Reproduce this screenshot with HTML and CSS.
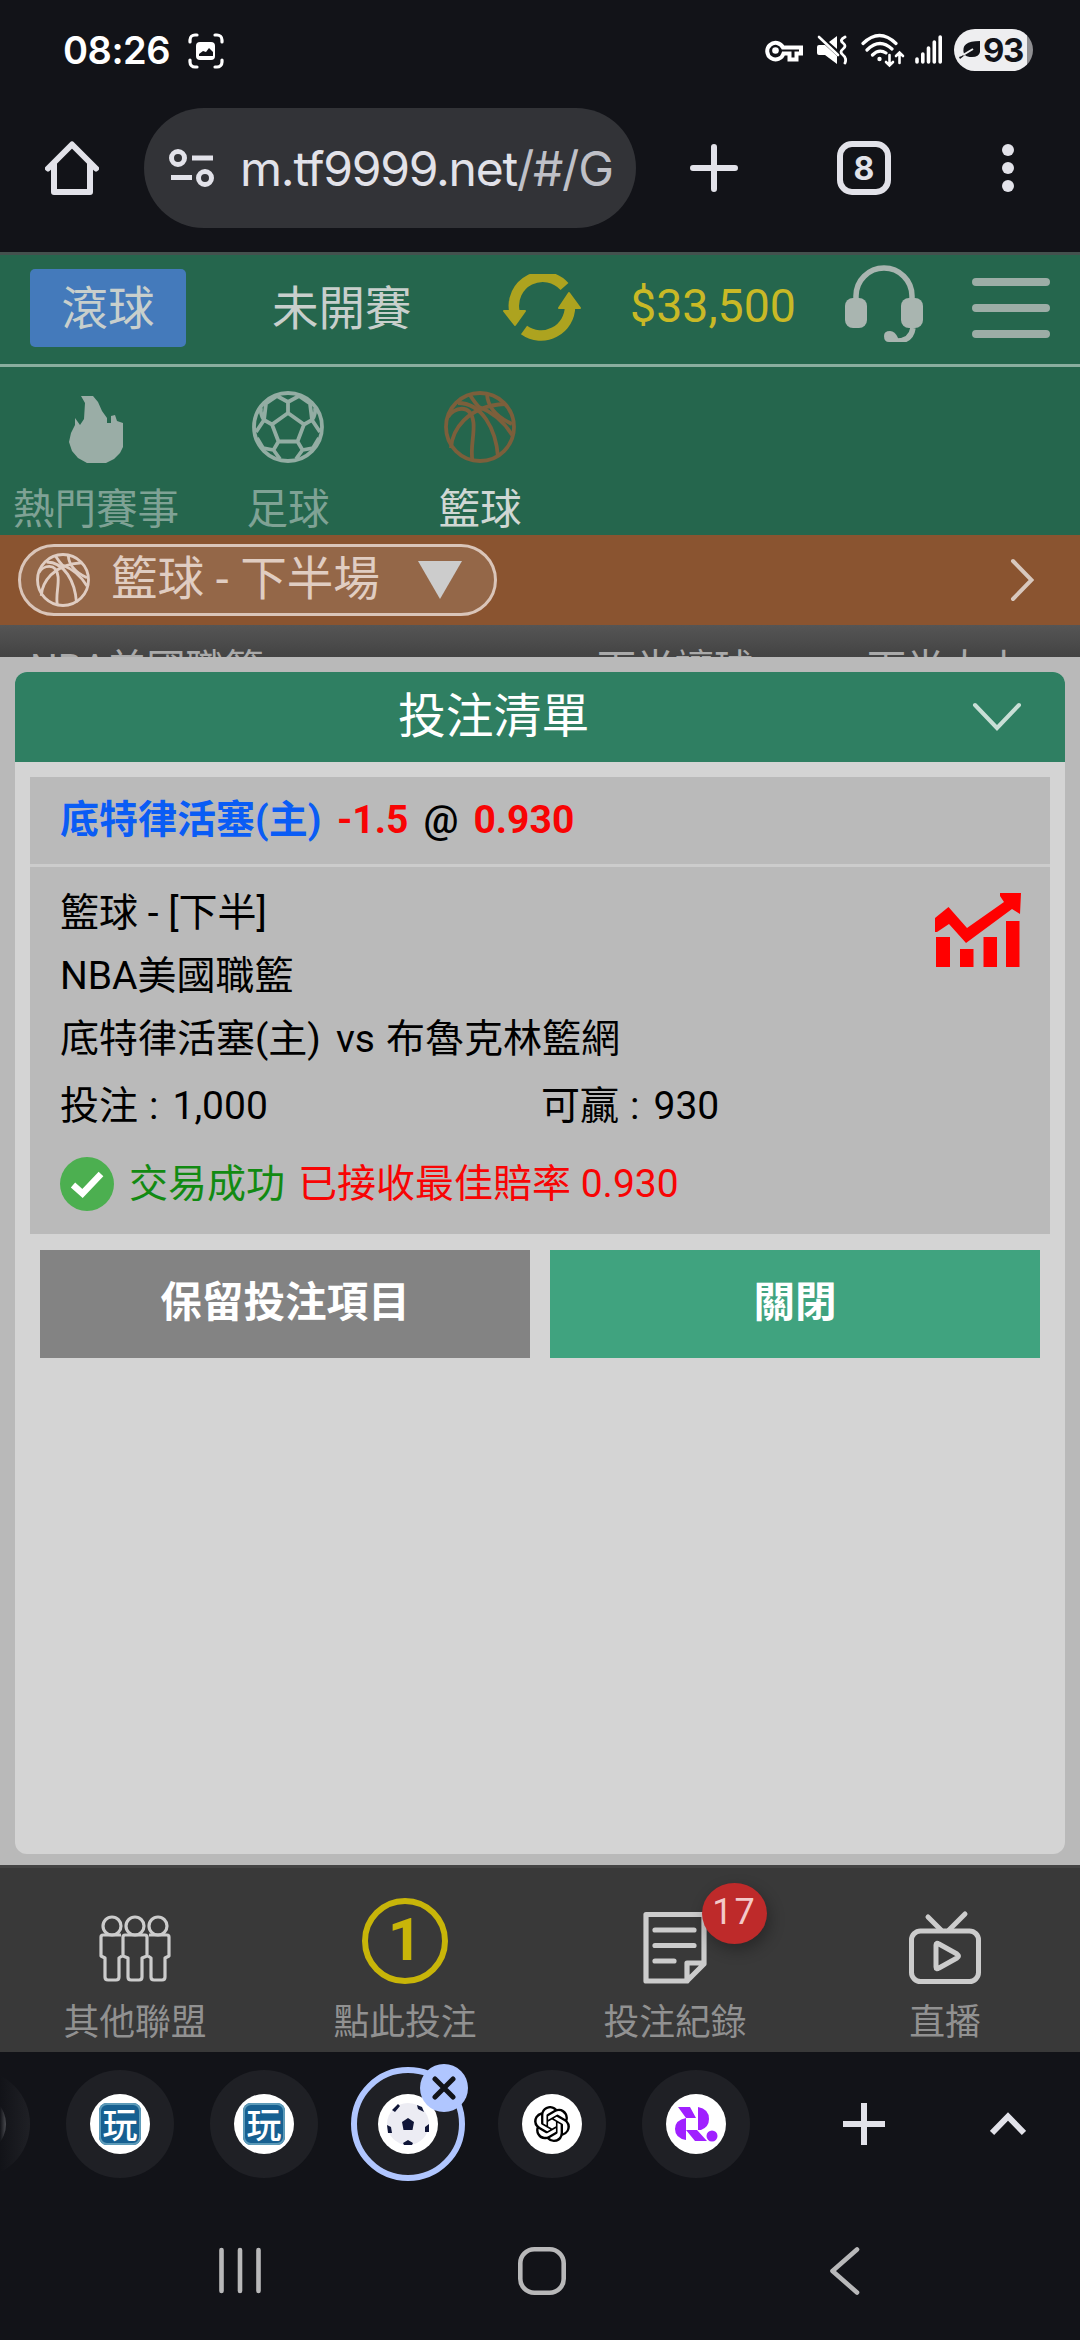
FILE: index.html
```html
<!DOCTYPE html>
<html lang="zh-Hant">
<head>
<meta charset="utf-8">
<title>投注清單</title>
<link rel="stylesheet" href="styles.css">
</head>
<body>
<svg class="defs" width="0" height="0" aria-hidden="true">
  <symbol id="basketball" viewBox="0 0 72 72">
    <g fill="none" stroke="currentColor" stroke-width="3.800">
      <circle cx="36" cy="36" r="34"/>
      <path d="M4 26C9 17 27 11 29.500 32C30.500 46 26 56 28.500 70"/>
      <path d="M7 57C8 40 22 15 61 13"/>
      <path d="M14 12C38 12 52 38 54 66"/>
      <path d="M26 4Q31 12 35 16Q56 24 68 44"/>
      <path d="M43 3Q44 22 68 33"/>
    </g>
  </symbol>
  <symbol id="seal" viewBox="0 0 60 60">
    <circle cx="30" cy="30" r="30" fill="#fff"/>
    <rect x="9" y="9" width="42" height="42" rx="8" fill="#176091"/>
    <rect x="10" y="10" width="40" height="40" rx="7" fill="none" stroke="#5c9ab8" stroke-width="2"/>
  </symbol>
</svg>

<header class="status">
  <span class="clock">08:26</span>
  <svg class="scan" width="36" height="36" viewBox="0 0 36 36" fill="none" stroke="#fff" stroke-width="3.200" stroke-linecap="round">
    <path d="M2 9V7a5 5 0 0 1 5-5h2M27 2h2a5 5 0 0 1 5 5v2M34 27v2a5 5 0 0 1-5 5h-2M9 34H7a5 5 0 0 1-5-5v-2"/>
    <rect x="8" y="9" width="19" height="18" rx="4" fill="#fff" stroke="none"/>
    <path d="M11 23v-2l4-3 3 1 3-4 4 4v4z" fill="#121318" stroke="none"/>
  </svg>
  <svg class="key" width="38" height="24" viewBox="0 0 38 24" fill="none" stroke="#fff" stroke-width="4">
    <path d="M18 8.500H36V14.500H31.500V20.500H24.500V14.500H18.500A8.300 8.300 0 1 1 18 8.500Z"/><circle cx="10.500" cy="11.500" r="3.300" fill="#fff" stroke="none"/>
  </svg>
  <svg class="mute" width="30" height="30" viewBox="0 0 30 30">
    <path d="M0 12Q0 10 2 10H8L20 21V29L8 20H2Q0 20 0 18ZM12 7L20 1V14Z" fill="#fff"/>
    <path d="M2 2L21 20" stroke="#fff" stroke-width="2.600" stroke-linecap="round"/>
    <path d="M28 2Q22 5 26 8T26 14T26 20T28 28" fill="none" stroke="#fff" stroke-width="2.800" stroke-linecap="round"/>
  </svg>
  <svg class="wifi" width="44" height="36" viewBox="0 0 44 36" fill="none" stroke="#fff" stroke-width="3.200" stroke-linecap="round">
    <path d="M2 10.500Q18.500-5.500 35 10.500M6 17Q18.500 4.500 31 16M11.500 22Q18 15.500 25 20"/><circle cx="18.500" cy="26" r="2.200" fill="#fff" stroke="none"/>
    <path d="M28.500 22V32M25 29L28.500 32.500L32 29M38.500 30V20M35 23L38.500 19.500L42 23" stroke-width="2.600"/>
  </svg>
  <svg class="signal" width="28" height="30" viewBox="0 0 28 30" stroke="#fff" stroke-width="3.600" stroke-linecap="round">
    <path d="M2 24V27M7.800 19V27M13.500 13V27M19.300 7V27M25.200 2V27"/>
  </svg>
  <div class="battery">
    <svg width="22" height="22" viewBox="0 0 22 22"><path d="M21 2V13Q20 18 13 18Q8 18 6 16Q1 20 1 20L0 18Q3 18 5 15Q1 2 21 2Z" fill="#121318"/><path d="M4 16L14 10" stroke="#eee" stroke-width="2"/></svg>
    <span>93</span>
  </div>
</header>

<div class="toolbar">
  <svg class="home" width="54" height="54" viewBox="0 0 54 54" fill="none" stroke="#e2e2e9" stroke-width="6" stroke-linecap="round" stroke-linejoin="round"><path d="M3 27.500L27 3.500L51 27.500M9 23V51H45V23"/></svg>
  <div class="omnibox">
    <svg width="46" height="40" viewBox="0 0 46 40" fill="none" stroke="#e2e2e9" stroke-width="5"><circle cx="9" cy="10" r="6.500"/><path d="M23 10H44M2 29.500H23"/><circle cx="36" cy="30" r="6.500"/></svg>
    <span class="url">m.tf9999.net<i>/#/G</i></span>
  </div>
  <svg class="add" width="48" height="48" viewBox="0 0 48 48" stroke="#e2e2e9" stroke-width="6" stroke-linecap="round"><path d="M24 3V45M3 24H45"/></svg>
  <span class="tabs">8</span>
  <svg class="more" width="12" height="48" viewBox="0 0 12 48" fill="#e2e2e9"><circle cx="6" cy="6" r="6"/><circle cx="6" cy="24" r="6"/><circle cx="6" cy="42" r="6"/></svg>
</div>

<main class="app">
  <div class="topnav">
    <span class="live">滾球</span>
    <span class="early">未開賽</span>
    <svg class="refresh" width="78" height="68" viewBox="0 0 78 68" fill="none" stroke="#ada31f" stroke-width="10.500">
      <path d="M61.500 12.500A29 29 0 0 0 11.500 38M21 56A29 29 0 0 0 67 32"/>
      <path d="M1 37H22L12 51ZM56 34H77L66 19Z" fill="#ada31f" stroke="#ada31f" stroke-width="2" stroke-linejoin="round"/>
    </svg>
    <span class="money">$33,500</span>
    <svg class="headset" width="78" height="78" viewBox="0 0 78 78" fill="none" stroke="#a9b5b0" stroke-width="5.500">
      <path d="M11 37V32A28 28 0 0 1 67 32V37M68 64Q66 77 52 77H44"/>
      <g fill="#a9b5b0" stroke="none"><rect y="34" width="22" height="30" rx="8"/><rect x="56" y="34" width="22" height="30" rx="8"/><path d="M39 72Q39 67 45 67Q50 67 53 74V78H44Q39 78 39 72Z"/></g>
    </svg>
    <svg class="menu" width="78" height="60" viewBox="0 0 78 60" stroke="#9cada6" stroke-width="8" stroke-linecap="round"><path d="M4 4H74M4 30H74M4 56H74"/></svg>
  </div>

  <nav class="sports">
    <div class="sport">
      <svg width="72" height="72" viewBox="0 0 72 72" fill="#9aada6"><path d="M21 5H33L38 11L42 20L47 27V32H51V25L55 24L57 30L63 32V56L60 62L54 68L46 72H27L18 67L12 60L9 51L11 42L15 34V27L20 34L24 28L25 12Z"/></svg>
      <span>熱門賽事</span>
    </div>
    <div class="sport">
      <svg width="72" height="72" viewBox="0 0 72 72" fill="none" stroke="#93ada3" stroke-width="3.800"><circle cx="36" cy="36" r="34"/><path d="M36 22L52 33.500L45.500 50.500H26.500L20 33.500ZM36 22V11M25 5L36 11L47 5M25 5L14 12.500L12 29L20 33.500M47 5L58 12.500L60 29L52 33.500M9 17Q8 23 12 29L4 41M63 17Q64 23 60 29L68 41M26.500 50.500L21.500 59L11 57L5 47M45.500 50.500L50.500 59L61 57L67 47M21.500 59L28 68M50.500 59L44 68"/></svg>
      <span>足球</span>
    </div>
    <div class="sport active">
      <svg width="72" height="72"><use href="#basketball"/></svg>
      <span>籃球</span>
    </div>
  </nav>

  <div class="filter">
    <div class="pill">
      <svg width="54" height="54"><use href="#basketball"/></svg>
      <span>籃球 - 下半場</span>
      <i class="caret"></i>
    </div>
    <svg width="24" height="44" viewBox="0 0 24 44" fill="none" stroke="#d8c8be" stroke-width="4" stroke-linecap="round"><path d="M3 3L21.500 22L3 41"/></svg>
  </div>

  <div class="league"><span class="name">NBA美國職籃</span><span class="col">下半讓球</span><span class="col">下半大小</span></div>

  <section class="sheet">
    <div class="card">
      <div class="title"><span>投注清單</span><svg width="50" height="30" viewBox="0 0 50 30" fill="none" stroke="#c9dfd6" stroke-width="4" stroke-linecap="round"><path d="M3 3L25 26L47 3"/></svg></div>
      <div class="bet">
        <div class="pick"><b class="team">底特律活塞(主)</b><b class="red">-1.5</b><span>@</span><b class="red">0.930</b></div>
        <div class="detail">
          <p>籃球 - [下半]</p>
          <p>NBA美國職籃</p>
          <p>底特律活塞(主)<span class="vs">vs</span>布魯克林籃網</p>
          <div class="amounts"><span>投注<i>:</i>1,000</span><span>可贏<i>:</i>930</span></div>
          <div class="result">
            <svg width="54" height="54" viewBox="0 0 54 54"><circle cx="27" cy="27" r="27" fill="#4caf50"/><path d="M13 28L22.500 36.500L41 17" fill="none" stroke="#fff" stroke-width="6.500"/></svg>
            <span class="ok">交易成功</span><span class="best">已接收最佳賠率 0.930</span>
          </div>
          <svg class="trend" width="86" height="74" viewBox="0 0 86 74" fill="#f00"><path d="M0 25L13.500 14L32 35L69 9L65 3V0H86L85 21L77 16L31 50L14 31L2 39H0Z"/><path d="M1 44H15V74H1ZM25 56H38.500V74H25ZM48.500 44H62V74H48.500ZM71 28H84.500V74H71Z"/></svg>
        </div>
      </div>
      <div class="actions"><button class="keep">保留投注項目</button><button class="close">關閉</button></div>
    </div>
  </section>

  <nav class="bottom">
    <div class="item">
      <svg width="86" height="86" viewBox="0 0 86 86" fill="none" stroke="#ccc" stroke-width="3.200" stroke-linejoin="round">
        <circle cx="20" cy="28" r="9"/><circle cx="43" cy="28" r="9"/><circle cx="66" cy="28" r="9"/>
        <path d="M33 37H53Q55 37 55 39V58L50 60V79Q50 82 47 82H39Q36 82 36 79V60L31 58V39Q31 37 33 37Z"/>
        <path d="M29 37H11Q9 37 9 39V58L13 60V79Q13 82 16 82H24Q27 82 27 79V60L30 58"/>
        <path d="M57 37H75Q77 37 77 39V58L73 60V79Q73 82 70 82H62Q59 82 59 79V60L56 58"/>
      </svg><span>其他聯盟</span>
    </div>
    <div class="item"><span class="count">1</span><span>點此投注</span></div>
    <div class="item">
      <svg width="86" height="86" viewBox="0 0 86 86" fill="none" stroke="#ccc" stroke-width="5.200" stroke-linejoin="round" stroke-linecap="round"><path d="M14 16.500H72V66L55 83H14ZM23 32H62M23 47.500H62M23 63H42M55 83V65H72"/></svg>
      <em class="badge">17</em><span>投注紀錄</span>
    </div>
    <div class="item">
      <svg width="86" height="86" viewBox="0 0 86 86" fill="none" stroke="#ccc" stroke-width="5" stroke-linecap="round" stroke-linejoin="round"><rect x="9.500" y="33" width="67" height="50.500" rx="9"/><path d="M26 19L39 32M63 16L47 32M34 47Q34 44 37 46L55 56Q58 58 55 60L37 70Q34 72 34 69Z"/></svg>
      <span>直播</span>
    </div>
  </nav>
</main>

<footer class="strip">
  <div class="tab cut"></div>
  <div class="tab"><svg width="60" height="60"><use href="#seal"/></svg><b class="glyph">玩</b></div>
  <div class="tab"><svg width="60" height="60"><use href="#seal"/></svg><b class="glyph">玩</b></div>
  <div class="tab current">
    <svg width="60" height="60" viewBox="0 0 60 60"><circle cx="30" cy="30" r="30" fill="#fff"/><circle cx="30" cy="30" r="21" fill="#ececf3"/><g fill="#101638"><path d="M24 28L30 24L36 28L34.500 36H25.500ZM14 16L20 10L22 12L17 18ZM39 11L44 13L46 18L40 15ZM9 31L13 33L14 39L10 39ZM47 33L51 30L51 38L47 38ZM25 49L30 46L35 49L34 51H26Z"/></g></svg>
    <span class="x"><svg width="24" height="24" viewBox="0 0 24 24" stroke="#121318" stroke-width="5" stroke-linecap="round"><path d="M3 3L21 21M21 3L3 21"/></svg></span>
  </div>
  <div class="tab"><span class="disc"><svg width="36" height="36" viewBox="0 0 24 24"><path d="M22.2819 9.8211a5.9847 5.9847 0 0 0-.5157-4.9108 6.0462 6.0462 0 0 0-6.5098-2.9A6.0651 6.0651 0 0 0 4.9807 4.1818a5.9847 5.9847 0 0 0-3.9977 2.9 6.0462 6.0462 0 0 0 .7427 7.0966 5.98 5.98 0 0 0 .511 4.9107 6.051 6.051 0 0 0 6.5146 2.9001A5.9847 5.9847 0 0 0 13.2599 24a6.0557 6.0557 0 0 0 5.7718-4.2058 5.9894 5.9894 0 0 0 3.9977-2.9001 6.0557 6.0557 0 0 0-.7475-7.0729zm-9.022 12.6081a4.4755 4.4755 0 0 1-2.8764-1.0408l.1419-.0804 4.7783-2.7582a.7948.7948 0 0 0 .3927-.6813v-6.7369l2.02 1.1686a.071.071 0 0 1 .038.052v5.5826a4.504 4.504 0 0 1-4.4945 4.4944zm-9.6607-4.1254a4.4708 4.4708 0 0 1-.5346-3.0137l.142.0852 4.783 2.7582a.7712.7712 0 0 0 .7806 0l5.8428-3.3685v2.3324a.0804.0804 0 0 1-.0332.0615L9.74 19.9502a4.4992 4.4992 0 0 1-6.1408-1.6464zM2.3408 7.8956a4.485 4.485 0 0 1 2.3655-1.9728V11.6a.7664.7664 0 0 0 .3879.6765l5.8144 3.3543-2.0201 1.1685a.0757.0757 0 0 1-.071 0l-4.8303-2.7865A4.504 4.504 0 0 1 2.3408 7.872zm16.5963 3.8558L13.1038 8.364 15.1192 7.2a.0757.0757 0 0 1 .071 0l4.8303 2.7913a4.4944 4.4944 0 0 1-.6765 8.1042v-5.6772a.79.79 0 0 0-.407-.667zm2.0107-3.0231l-.142-.0852-4.7735-2.7818a.7759.7759 0 0 0-.7854 0L9.409 9.2297V6.8974a.0662.0662 0 0 1 .0284-.0615l4.8303-2.7866a4.4992 4.4992 0 0 1 6.6802 4.66zM8.3065 12.863l-2.02-1.1638a.0804.0804 0 0 1-.038-.0567V6.0742a4.4992 4.4992 0 0 1 7.3757-3.4537l-.142.0805L8.704 5.459a.7948.7948 0 0 0-.3927.6813zm1.0976-2.3654l2.602-1.4998 2.6069 1.4998v2.9994l-2.5974 1.4997-2.6067-1.4997Z"/></svg></span></div>
  <div class="tab"><svg width="60" height="60" viewBox="0 0 60 60"><circle cx="30" cy="30" r="30" fill="#fff"/><g fill="#a020ff"><path d="M12 13H24L30 24H20ZM32 13Q43 15 43 25Q43 33 35 36H32ZM20 24V46Q9 44 9 35Q9 26 20 24ZM20 36H31L41 47H29Z"/><circle cx="46" cy="42" r="5.500"/></g><rect x="21" y="24.500" width="11" height="11" fill="#fff"/></svg></div>
  <svg class="new" width="42" height="42" viewBox="0 0 42 42" stroke="#e2e2e9" stroke-width="6"><path d="M21 0V42M0 21H42"/></svg>
  <svg class="up" width="36" height="24" viewBox="0 0 36 24" fill="none" stroke="#e2e2e9" stroke-width="6"><path d="M2 21L18 4.500L34 21"/></svg>
</footer>

<nav class="system">
  <svg width="42" height="48" viewBox="0 0 42 48" stroke="#b8b8b9" stroke-width="4.600" stroke-linecap="round"><path d="M2.500 3V44M21 3V44M39.500 3V44"/></svg>
  <svg class="round" width="48" height="48" viewBox="0 0 48 48" fill="none" stroke="#b8b8b9" stroke-width="4.600"><rect x="2.300" y="2.300" width="43.400" height="43.400" rx="14"/></svg>
  <svg class="back" width="30" height="48" viewBox="0 0 30 48" fill="none" stroke="#b8b8b9" stroke-width="4.600" stroke-linecap="round" stroke-linejoin="round"><path d="M27 2.500L2.500 24L27 45.500"/></svg>
</nav>
</body>
</html>
```
FILE: styles.css
```css
* { box-sizing: border-box; }
body {
  margin: 0;
  width: 1080px;
  height: 2340px;
  overflow: hidden;
  background: #121318;
  font-family: Roboto, "Noto Sans CJK TC", sans-serif;
}
svg { display: block; flex: none; }
.defs { position: absolute; }
i, em { font-style: normal; }
p { margin: 0; }

/* Android status bar */
.status { display: flex; height: 100px; padding-left: 63px; align-items: flex-start; }
.clock { width: 106px; margin-top: 26px; font: 600 38px/48px Inter, sans-serif; color: #fff; letter-spacing: -.5px; }
.scan { margin: 33px 0 0 19px; }
.key { margin: 39px 0 0 541px; }
.mute { margin: 35px 0 0 14px; }
.wifi { margin: 33px 0 0 14px; }
.signal { margin: 35px 0 0 10px; }
.battery {
  display: flex; align-items: center;
  width: 79px; height: 42px; margin: 29px 0 0 11px; padding-left: 5px;
  border-radius: 21px;
  background: linear-gradient(90deg, #eeeef0 73px, #8f8f92 73px);
}
.battery span { margin-left: 2px; font: 700 33px/42px Inter, sans-serif; color: #121318; letter-spacing: -1.5px; }

/* Browser toolbar */
.toolbar { display: flex; align-items: center; height: 152px; padding: 0 0 16px 45px; }
.omnibox {
  display: flex; align-items: center;
  width: 492px; height: 120px; margin-left: 45px; padding-left: 25px;
  border-radius: 60px; background: #323337;
}
.url { margin: 2px 0 0 25px; font: 400 48px/60px Inter, sans-serif; color: #e2e2e9; white-space: nowrap; letter-spacing: -1.25px; }
.url i { color: #bfc0c7; }
.add { margin-left: 54px; }
.tabs {
  width: 54px; height: 54px; margin-left: 99px;
  border: 6px solid #e2e2e9; border-radius: 15px;
  font: 700 32px/43px Inter, sans-serif; color: #e2e2e9; text-align: center;
}
.more { margin-left: 111px; }

/* Site header */
.app { border-top: 3px solid #44514e; background: #25664d; }
.topnav { display: flex; height: 112px; padding-left: 30px; border-bottom: 3px solid #8aae9f; font-size: 46.500px; line-height: 80px; color: #c8cfcc; }
.live { width: 156px; height: 78px; margin-top: 14px; border-radius: 5px; background: #447abb; text-align: center; }
.early { width: 138px; margin: 14px 0 0 86px; white-space: nowrap; }
.refresh { margin: 19px 0 0 93px; }
.money { width: 165px; margin: 14px 0 0 49px; font-size: 46.500px; line-height: 75px; color: #c9b926; }
.headset { margin: 9px 0 0 50px; }
.menu { margin: 23px 0 0 49px; }

.sports { display: flex; height: 168px; }
.sport { display: flex; flex-direction: column; align-items: center; width: 192px; padding-top: 24px; color: #7fa295; }
.sport span { margin-top: 20px; font-size: 41.600px; line-height: 54px; }
.sport.active { color: #d0d7d4; }
.sport.active svg { color: #7c5f3b; }

.filter { display: flex; align-items: center; justify-content: space-between; height: 90px; padding: 0 46px 0 18px; background: #8a5430; color: #e0cdc2; }
.pill { display: flex; align-items: center; width: 479px; height: 72px; padding-left: 15px; border: 3px solid #dac5b9; border-radius: 36px; background: #946748; }
.pill span { width: 269px; margin: 0 0 3px 21px; font-size: 46.600px; line-height: 60px; white-space: nowrap; }
.caret { margin-left: 38px; border: 22px solid transparent; border-top: 38px solid #ccc; border-bottom: 0; }

.league { display: flex; height: 32px; padding-left: 30px; overflow: hidden; background: linear-gradient(#555, #434343); color: #aaa; font-size: 39px; line-height: 44px; white-space: nowrap; }
.league span { flex: none; margin-top: 22px; }
.league .name { width: 567px; }
.league .col { width: 270px; }

/* Bet slip */
.sheet { height: 1208px; padding: 15px 15px 11px; background: #b9b9b9; }
.card { height: 1182px; border-radius: 12px; overflow: hidden; background: #d4d4d4; }
.title { display: flex; align-items: center; height: 90px; padding-left: 383px; background: #2f7f62; color: #fff; font-size: 47.800px; line-height: 84px; }
.title span { width: 192px; white-space: nowrap; }
.title svg { margin-left: 382px; }
.bet { height: 457px; margin: 15px 15px 0; background: #bababa; color: #000; font-size: 39px; }
.pick { display: flex; height: 90px; padding: 18px 0 0 30px; border-bottom: 3px solid #ccc; line-height: 50px; white-space: nowrap; }
.team { width: 277px; color: #0a5cf5; }
.red { color: #f80404; }
.pick span { width: 34px; margin: 0 16px 0 15px; font-weight: 500; }
.detail { position: relative; padding: 15px 0 0 30px; }
.detail p { height: 63px; line-height: 63px; }
.vs { margin: 0 11px 0 15px; }
.amounts { display: grid; grid-template-columns: 481px 1fr; height: 66px; line-height: 70px; }
.amounts i { margin: 0 14px 0 11px; }
.result { display: flex; height: 54px; margin-top: 20px; line-height: 54px; white-space: nowrap; }
.ok { margin-left: 15px; color: #128a12; }
.best { margin-left: 13px; color: #f80404; }
.trend { position: absolute; right: 29px; top: 26px; }
.actions { display: grid; grid-template-columns: 490px 490px; gap: 20px; padding: 16px 25px 0; }
.actions button { height: 108px; padding: 0 0 2px; border: 0; color: #fff; font: 700 41.600px/100px Roboto, "Noto Sans CJK TC", sans-serif; }
.keep { background: #838383; }
.close { background: #40a37f; }

/* Site bottom navigation */
.bottom { display: grid; grid-template-columns: repeat(4, 270px); height: 187px; border-top: 3px solid #444; background: #393939; }
.item { position: relative; display: flex; flex-direction: column; align-items: center; padding-top: 30px; color: #919191; font-size: 35.800px; line-height: 46px; }
.item > span:last-child { margin-top: 16px; }
.count { width: 86px; height: 86px; border: 6px solid #c8b509; border-radius: 50%; color: #c8b509; font-weight: 700; font-size: 60px; line-height: 72px; text-align: center; }
.badge { position: absolute; left: 162px; top: 15px; width: 65px; height: 61px; border-radius: 50%; background: #be2a2a; box-shadow: 3px 6px 15px rgba(0,0,0,.3); color: #f3c9c9; font-size: 36px; line-height: 58px; letter-spacing: 2px; text-align: center; }

/* Tab strip */
.strip { display: flex; align-items: center; height: 144px; margin-left: -78px; }
.tab { position: relative; display: flex; align-items: center; justify-content: center; flex: none; width: 108px; height: 108px; margin-right: 36px; border-radius: 50%; background: #1f2025; }
.cut { background: linear-gradient(90deg, #121318 78px, #1f2025); }
.cut::after { content: ""; width: 60px; height: 60px; border-radius: 50%; background: linear-gradient(90deg, #121318 54px, #4a4b50); }
.glyph { position: absolute; left: 24px; top: 24px; width: 60px; color: #fff; font: 500 35px/58px "Noto Sans CJK TC", sans-serif; text-align: center; }
.current { width: 114px; height: 114px; margin: 0 33px 0 -3px; border: 6px solid #b0c6ff; }
.x { position: absolute; left: 63px; top: -9px; display: flex; align-items: center; justify-content: center; width: 48px; height: 48px; border-radius: 50%; background: #b0c6ff; }
.disc { display: flex; align-items: center; justify-content: center; width: 60px; height: 60px; border-radius: 50%; background: #fff; }
.new { margin-left: 57px; }
.up { margin-left: 105px; }

/* System navigation */
.system { display: flex; align-items: center; height: 150px; padding-left: 219px; }
.round { margin-left: 257px; }
.back { margin-left: 264px; }
```
